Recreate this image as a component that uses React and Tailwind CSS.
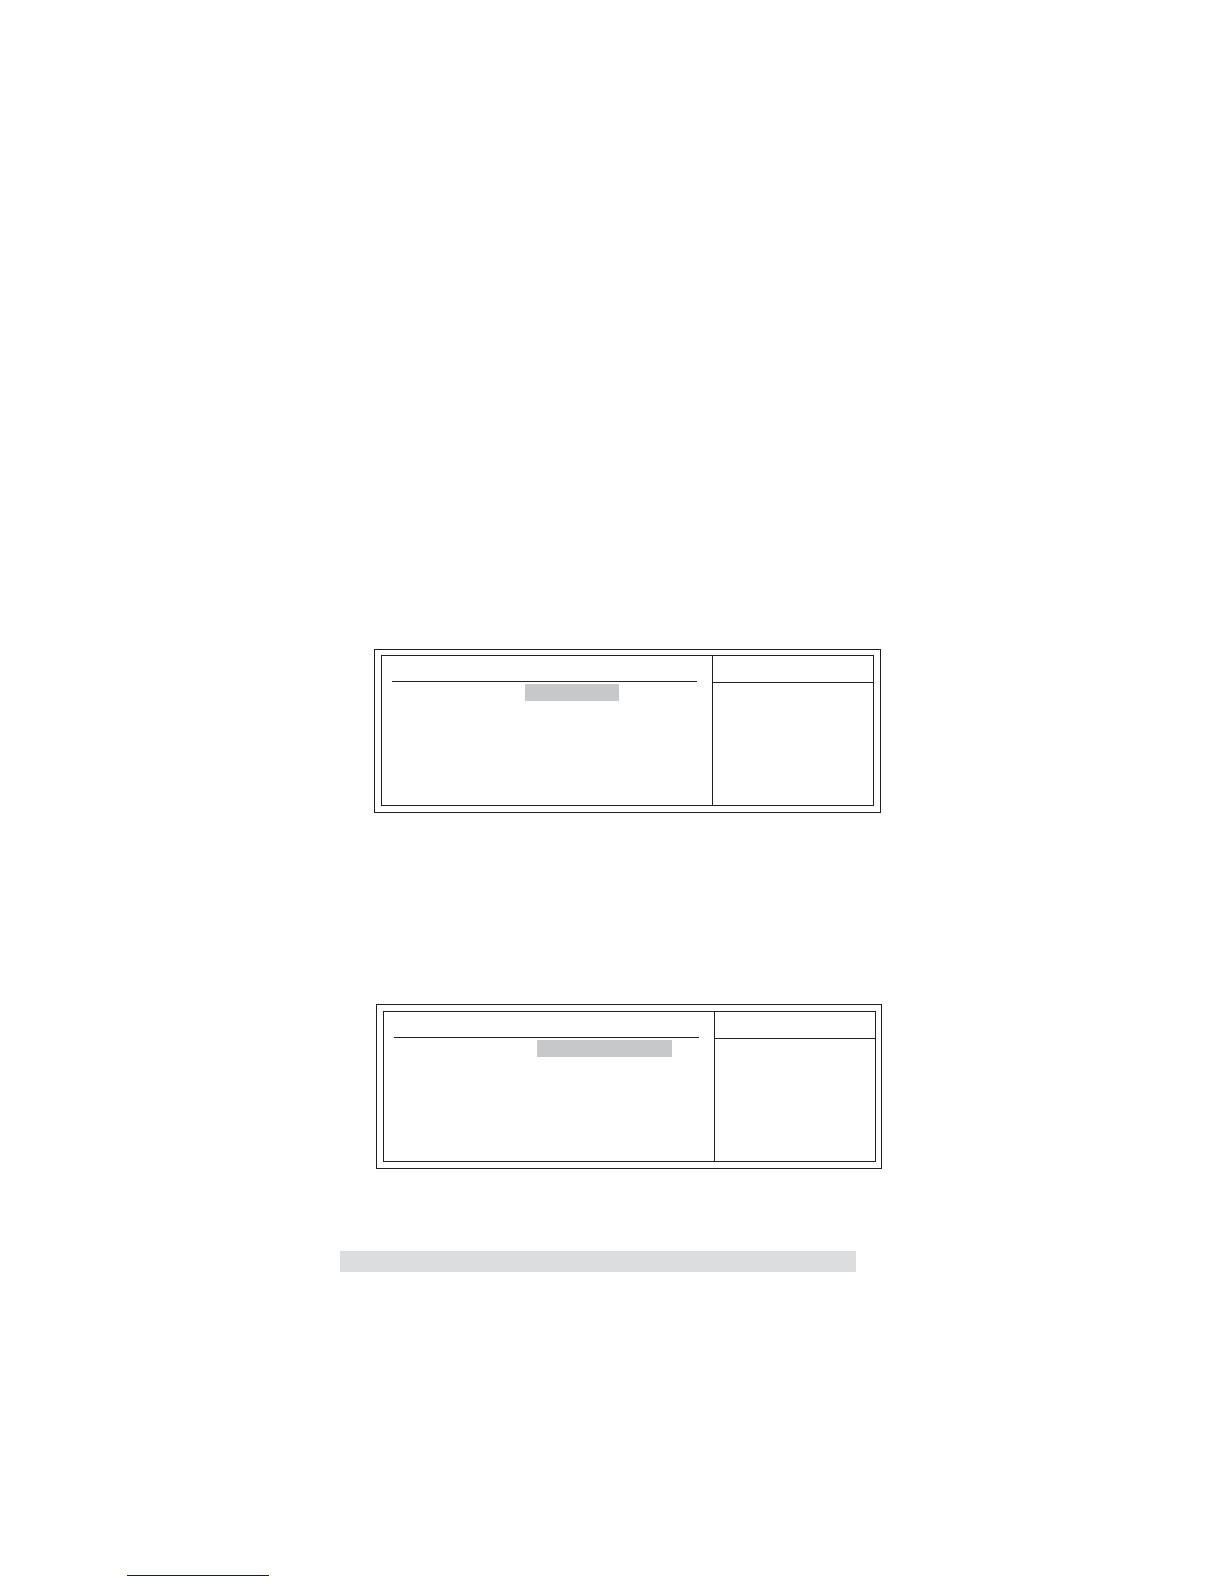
import React from 'react';

function SetupPanel({ className, highlightClass }) {
  return (
    <section className={`border border-[#231f20] ${className}`}>
      <div className="flex h-[151px] border border-[#231f20]">
        {/* item list */}
        <div className="flex-1">
          <div className="h-[26px] ml-[10px] mr-[15px] border-b border-[#231f20]"></div>
          <div className={`h-[17px] mt-[2px] bg-[#c7c8ca] ${highlightClass}`}></div>
        </div>

        {/* item help */}
        <aside className="w-[161px] border-l border-[#231f20]">
          <div className="h-[27px] border-b border-[#231f20]"></div>
        </aside>
      </div>
    </section>
  );
}

function App() {
  return (
    <div className="min-h-screen bg-white font-['Liberation_Sans',sans-serif]">
      <main className="mx-auto w-full max-w-[544px] pt-[649px]">
        <SetupPanel
          className="ml-[34px] mr-[3px] px-[6px] pt-[5px] pb-[6px]"
          highlightClass="ml-[143px] w-[94px]"
        />
        <SetupPanel
          className="mt-[191px] ml-[36px] mr-[2px] pl-[6px] pr-[5px] py-[6px]"
          highlightClass="ml-[153px] w-[135px]"
        />
        <div className="mt-[82px] mr-[28px] h-[21px] bg-[#dcddde]"></div>
      </main>

      <footer className="flex pt-[303px] pb-2 pl-[127px]">
        <a
          href="#"
          aria-label="Home"
          className="block w-[142px] h-px bg-[#10108a]"
        ></a>
      </footer>
    </div>
  );
}

export default App;
